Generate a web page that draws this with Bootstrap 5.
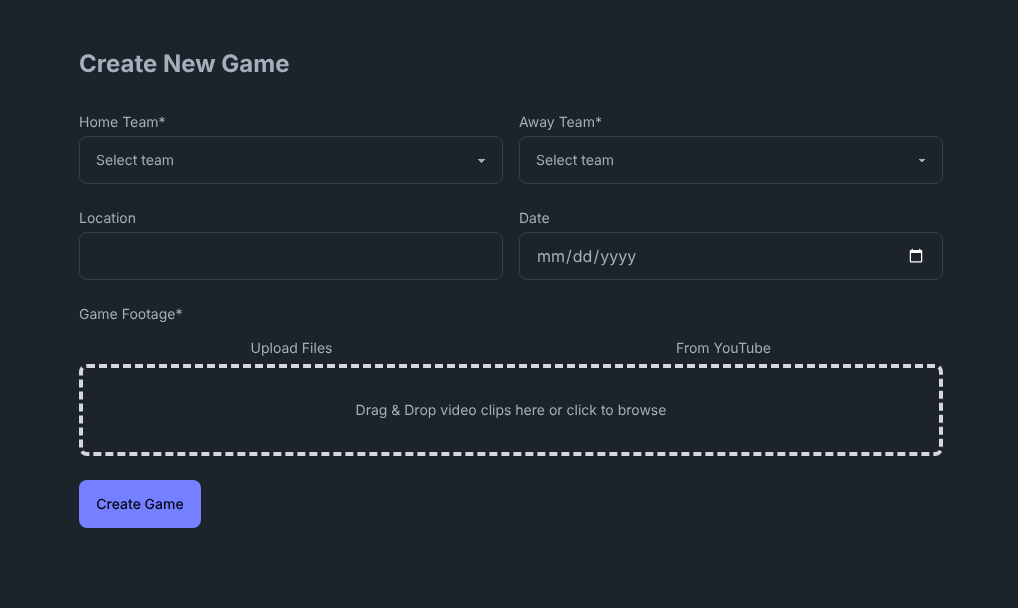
<!DOCTYPE html>
<html lang="en" data-bs-theme="dark">
<head>
<meta charset="utf-8">
<title>Create New Game</title>
<link href="https://cdn.jsdelivr.net/npm/bootstrap@5.3.0/dist/css/bootstrap.min.css" rel="stylesheet">
<style>
html, body { height: 100%; }
body { background: #1d232a; color: #a6adbb; font-family: Inter, "Liberation Sans", sans-serif; font-size: 14px; text-rendering: geometricPrecision; }
.page-wrap { width: 864px; margin-left: 79px; padding-top: 48px; will-change: opacity; }
.page-heading { font-size: 24px; line-height: 32px; font-weight: 700; margin-bottom: 32px; color: #a6adbb; }
.field-label { display: block; font-size: 14px; line-height: 22px; margin-bottom: 2px; color: #a6adbb; }
.field-grid { --bs-gutter-x: 16px; --bs-gutter-y: 24px; margin-bottom: 24px; }
.field-ctl.form-control, .field-ctl.form-select {
  height: 48px; background-color: #1d232a; color: #a6adbb; border: 1px solid #3a4049; border-radius: 8px;
  box-shadow: none; font-family: inherit; text-rendering: geometricPrecision;
}
.field-ctl.form-select {
  font-size: 14px; padding: 0 40px 0 16px;
  background-image: linear-gradient(45deg, transparent 50%, #a6adbb 50%), linear-gradient(135deg, #a6adbb 50%, transparent 50%);
  background-position: calc(100% - 20px) calc(1px + 50%), calc(100% - 16.1px) calc(1px + 50%);
  background-size: 4px 4px, 4px 4px; background-repeat: no-repeat;
}
.field-ctl.form-control { font-size: 16px; padding: 0 16px; }
.field-ctl[type=date] { color-scheme: dark; color: #a6adbb; }
.field-ctl::-webkit-datetime-edit-month-field,
.field-ctl::-webkit-datetime-edit-day-field,
.field-ctl::-webkit-datetime-edit-year-field { padding: 1px; }
.tab-label { font-size: 14px; line-height: 22px; height: 24px; color: #a6adbb; text-align: center; padding: 0; background: none; border: 0; text-rendering: geometricPrecision; }
.tab-first { flex: 0 0 425px; }
.tab-second { flex: 1 1 0; }
.tab-strip { margin-top: 11px; margin-bottom: 3px; }
.drop-area { height: 92px; border: 4px dashed #d4d7dd; border-radius: 8px; color: #a6adbb; margin-bottom: 24px; cursor: pointer; }
.submit-btn.btn { height: 48px; width: 122px; padding: 0; background: #7480ff; border: 0; border-radius: 8px; color: #050617; font-size: 14px; font-weight: 500; text-rendering: geometricPrecision; }
</style>
</head>
<body>
<main class="page-wrap">
  <h1 class="page-heading">Create New Game</h1>
  <form>
    <div class="row field-grid">
      <div class="col-6">
        <label class="field-label" for="home">Home Team*</label>
        <select id="home" class="form-select field-ctl"><option>Select team</option></select>
      </div>
      <div class="col-6">
        <label class="field-label" for="away">Away Team*</label>
        <select id="away" class="form-select field-ctl"><option>Select team</option></select>
      </div>
      <div class="col-6">
        <label class="field-label" for="loc">Location</label>
        <input id="loc" type="text" class="form-control field-ctl">
      </div>
      <div class="col-6">
        <label class="field-label" for="date">Date</label>
        <input id="date" type="date" class="form-control field-ctl">
      </div>
    </div>
    <span class="field-label">Game Footage*</span>
    <div class="d-flex tab-strip">
      <button type="button" class="tab-label tab-first">Upload Files</button>
      <button type="button" class="tab-label tab-second">From YouTube</button>
    </div>
    <div class="drop-area d-flex align-items-center justify-content-center">Drag &amp; Drop video clips here or click to browse</div>
    <button type="submit" class="btn submit-btn">Create Game</button>
  </form>
</main>
<script src="https://cdn.jsdelivr.net/npm/bootstrap@5.3.0/dist/js/bootstrap.bundle.min.js"></script>
</body>
</html>
